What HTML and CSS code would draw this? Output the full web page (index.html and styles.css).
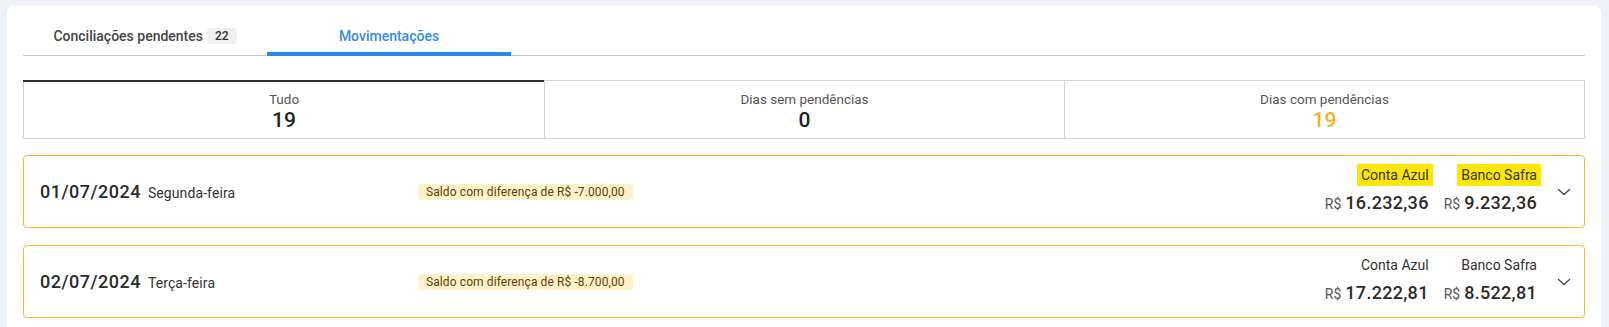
FILE: index.html
```html
<!DOCTYPE html>
<html lang="pt-BR">
<head>
<meta charset="utf-8">
<title>Movimentações</title>
<link rel="stylesheet" href="styles.css">
</head>
<body>
<div class="panel">
  <div class="tabs">
    <div class="tab">Conciliações pendentes <span class="count">22</span></div>
    <div class="tab active">Movimentações</div>
  </div>

  <div class="summary">
    <div class="cell active">
      <div class="cell-label">Tudo</div>
      <div class="cell-value">19</div>
    </div>
    <div class="cell">
      <div class="cell-label">Dias sem pendências</div>
      <div class="cell-value">0</div>
    </div>
    <div class="cell">
      <div class="cell-label">Dias com pendências</div>
      <div class="cell-value warn">19</div>
    </div>
  </div>

  <div class="day">
    <div class="day-info">
      <span class="date">01/07/2024</span>
      <span class="weekday">Segunda-feira</span>
    </div>
    <span class="diff">Saldo com diferença de R$ -7.000,00</span>
    <div class="balances">
      <div class="balance">
        <span class="source hl">Conta Azul</span>
        <div class="amount"><span class="cur">R$</span><span class="num">16.232,36</span></div>
      </div>
      <div class="balance">
        <span class="source hl">Banco Safra</span>
        <div class="amount"><span class="cur">R$</span><span class="num">9.232,36</span></div>
      </div>
    </div>
    <button class="toggle" aria-label="Expandir">
      <svg width="24" height="24" viewBox="0 0 24 24" fill="none" stroke="#4a4a4a" stroke-width="1.4" stroke-linecap="round" stroke-linejoin="round"><path d="M6.5 9.5 L12 14.5 L17.5 9.5"/></svg>
    </button>
  </div>

  <div class="day">
    <div class="day-info">
      <span class="date">02/07/2024</span>
      <span class="weekday">Terça-feira</span>
    </div>
    <span class="diff">Saldo com diferença de R$ -8.700,00</span>
    <div class="balances">
      <div class="balance">
        <span class="source">Conta Azul</span>
        <div class="amount"><span class="cur">R$</span><span class="num">17.222,81</span></div>
      </div>
      <div class="balance">
        <span class="source">Banco Safra</span>
        <div class="amount"><span class="cur">R$</span><span class="num">8.522,81</span></div>
      </div>
    </div>
    <button class="toggle" aria-label="Expandir">
      <svg width="24" height="24" viewBox="0 0 24 24" fill="none" stroke="#4a4a4a" stroke-width="1.4" stroke-linecap="round" stroke-linejoin="round"><path d="M6.5 9.5 L12 14.5 L17.5 9.5"/></svg>
    </button>
  </div>
</div>
</body>
</html>
```

FILE: styles.css
```css
* { box-sizing: border-box; }

html, body {
  margin: 0;
  padding: 0;
  background: #eef1f5;
  font-family: Roboto, "Liberation Sans", Arial, sans-serif;
  color: #333;
}

.panel {
  margin: 6px 8px 0 7px;
  padding: 14px 16px 40px;
  background: #fff;
  border-radius: 6px;
  min-height: 400px;
}

/* Tabs */
.tabs {
  display: flex;
  border-bottom: 1px solid #c8c8c8;
}

.tab {
  width: 244px;
  height: 36px;
  margin-bottom: -1px;
  display: flex;
  align-items: center;
  justify-content: center;
  gap: 4px;
  font-size: 14px;
  font-weight: 500;
  color: #454545;
  border-bottom: 4px solid transparent;
}

.tab.active {
  color: #3b8ae6;
  border-bottom-color: #2a88e8;
}

.count {
  display: inline-block;
  background: #f0f0f0;
  border-radius: 4px;
  padding: 0 8px;
  font-size: 12px;
  line-height: 16px;
  font-weight: 500;
  color: #333;
}

/* Summary */
.summary {
  margin-top: 24px;
  display: grid;
  grid-template-columns: 1fr 1fr 1fr;
  border: 1px solid #cbd4df;
}

.cell {
  position: relative;
  text-align: center;
  padding: 10px 0 7px;
}

.cell + .cell {
  border-left: 1px solid #cbd4df;
}

.cell.active::before {
  content: "";
  position: absolute;
  left: -1px;
  right: 0;
  top: -1px;
  height: 2px;
  background: #2b2b2b;
}

.cell-label {
  font-size: 13.5px;
  line-height: 17px;
  color: #555;
}

.cell-value {
  margin-top: 2px;
  font-size: 21px;
  line-height: 21px;
  font-weight: 500;
  color: #222;
}

.cell-value.warn {
  color: #f9ae1b;
}

/* Day rows */
.day {
  margin-top: 17px;
  display: flex;
  align-items: center;
  border: 1px solid #f6ba2e;
  border-radius: 4px;
  padding: 0 8px 0 16px;
}

.summary + .day {
  margin-top: 16px;
}

.day-info {
  width: 378px;
  display: flex;
  align-items: baseline;
  gap: 7px;
}

.date {
  font-size: 18px;
  font-weight: 500;
  color: #2b2b2b;
  letter-spacing: 0.5px;
}

.weekday {
  font-size: 14px;
  color: #333;
  letter-spacing: 0.1px;
}

.diff {
  background: #fff1c9;
  color: #5e4300;
  font-size: 12px;
  line-height: 16px;
  padding: 0 8px;
  border-radius: 4px;
  letter-spacing: 0.1px;
}

.balances {
  margin-left: auto;
  display: flex;
  gap: 15px;
  padding: 8px 0 11px;
}

.balance {
  display: flex;
  flex-direction: column;
  align-items: flex-end;
  gap: 5px;
}

.source {
  display: inline-block;
  font-size: 14px;
  line-height: 22px;
  color: #333;
  padding: 0 4px;
  margin-right: -4px;
}

.source.hl {
  background: #ffe600;
}

.amount {
  display: flex;
  align-items: baseline;
  line-height: 24px;
}

.cur {
  font-size: 14px;
  color: #555;
  margin-right: 4px;
}

.num {
  font-size: 18px;
  font-weight: 500;
  color: #2b2b2b;
  letter-spacing: 0.3px;
}

.toggle {
  margin-left: 15px;
  width: 24px;
  height: 24px;
  padding: 0;
  border: 0;
  background: none;
  display: flex;
  align-items: center;
  justify-content: center;
}
```
